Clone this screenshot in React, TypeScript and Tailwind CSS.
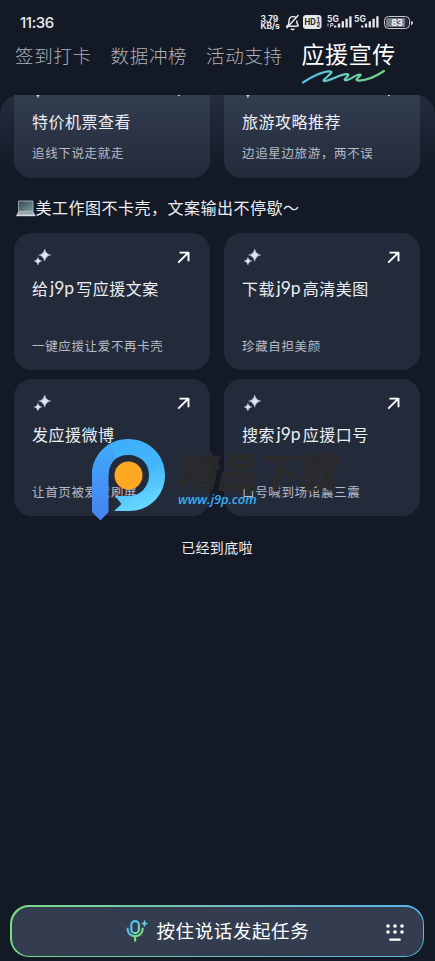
import React from 'react';

const Sparkles = () => (
  <svg width="18" height="18" viewBox="0 0 18 18">
    <defs>
      <linearGradient id="spark" x1="0" y1="0" x2="1" y2="1">
        <stop offset="0" stopColor="#8ea5c4" />
        <stop offset=".5" stopColor="#e2edf5" />
        <stop offset="1" stopColor="#a9bac0" />
      </linearGradient>
    </defs>
    <path d="M10.700 1C12 4.900 13.200 6.300 17 7.100C13.200 7.900 12 9.400 10.700 13.200C9.400 9.400 8.200 7.900 4.500 7.100C8.200 6.300 9.400 4.900 10.700 1Z" fill="url(#spark)" stroke="#b4c4d6" strokeWidth=".4" />
    <path d="M3.900 9.200C4.700 11.600 5.400 12.500 8 13C5.400 13.500 4.700 14.500 3.900 17C3.100 14.500 2.400 13.500 0 13C2.400 12.500 3.100 11.600 3.900 9.200Z" fill="url(#spark)" stroke="#b4c4d6" strokeWidth=".4" />
  </svg>
);

const Arrow = () => (
  <svg width="13" height="13" viewBox="0 0 13 13" fill="none" stroke="#fff" strokeWidth="1.9" strokeLinejoin="round">
    <path d="M1.200 11.600L11.200 1.800M2.500 1.600H11.500V10.300" />
  </svg>
);

const Card = ({ title, sub }: { title: React.ReactNode; sub: string }) => (
  <div className="h-[137px] rounded-[18px] bg-[#232b3b] pl-[18px] pr-5 pt-[15px]">
    <div className="flex h-[18px] justify-between">
      <span className="pl-0.5"><Sparkles /></span>
      <span className="pt-[3px]"><Arrow /></span>
    </div>
    <div className="mt-[10px] flex h-6 items-center whitespace-nowrap text-[16px] leading-[22px] tracking-[0.5px] text-[#eceef2]">{title}</div>
    <div className="mt-[36px] h-5 whitespace-nowrap text-[12.5px] leading-5 tracking-[0.65px] text-[#b7bcc6]">{sub}</div>
  </div>
);

const TopCard = ({ title, sub }: { title: string; sub: string }) => (
  <div className="h-[83px] overflow-hidden rounded-b-[18px] bg-linear-to-b from-[#323d50] to-[#232b3b] pl-[18px] pr-5">
    <div className="flex h-[14px] justify-between">
      <span className="-mt-[14px] pl-0.5"><Sparkles /></span>
      <span className="-mt-[11px]"><Arrow /></span>
    </div>
    <div className="flex h-6 items-center text-[16px] tracking-[0.5px] text-[#eceef2]">{title}</div>
    <div className="mt-[10px] h-5 text-[12.5px] leading-5 tracking-[0.65px] text-[#b7bcc6]">{sub}</div>
  </div>
);

const Latin = () => <span className="ml-[1.5px] mr-[2px] font-['Lato'] text-[17.5px] leading-6 tracking-[0px]">j9p</span>;

const Signal = ({ data }: { data?: boolean }) => (
  <svg className="overflow-visible" width="26" height="15" viewBox="0 0 26 15">
    <text x="0" y="7.500" fontSize="8.500" fontWeight="700" fill="#e3e5e9" fontFamily="Inter, sans-serif">5G</text>
    {data && <path d="M1 9.500V12.500M3.600 13.500V9.500H6V11.500H4" stroke="#c5c9d0" strokeWidth="1" fill="none" />}
    <path d="M8.200 13.500V11.400M12 13.500V9.500M15.800 13.500V7.200M19.600 13.500V4.800M23.400 13.500V2.200" stroke="#e7e9ed" strokeWidth="2.300" />
  </svg>
);

const StatusBar = () => (
  <div className="flex h-[38px] items-start pl-5 pt-[14px] text-[#e7e9ed]">
    <div className="w-[240.5px] font-['Inter'] text-[15px] font-medium leading-[18px] tracking-[-0.4px]">11:36</div>
    <div className="w-[24.5px] pt-[1.5px] font-['Inter'] text-[8.5px] font-bold leading-[7.5px] tracking-[-0.2px]">
      <div>3.79</div>
      <div>KB/s</div>
    </div>
    <svg className="-mt-px" width="18" height="18" viewBox="0 0 18 18" fill="none" stroke="#e3e5e9" strokeWidth="1.500">
      <path d="M1 13.200H12.800M2.700 13C4.500 11 3.200 7 5 4.800C6.600 3 9.600 3 11 4.800M11.700 7.500C11.700 10 12 11.500 13.600 13.200M5.800 15.800Q7.600 17.400 9.400 15.800M13.500 2L1.500 15.200" />
    </svg>
    <svg className="mt-px" width="19" height="14" viewBox="0 0 19 14">
      <rect width="18.500" height="14" rx="3" fill="#e3e5e9" />
      <text x="1.500" y="10.300" fontSize="8.500" fontWeight="700" fill="#202636" fontFamily="Inter, sans-serif" textLength="11.300" lengthAdjust="spacingAndGlyphs">HD</text>
      <text x="13.800" y="6.500" fontSize="5.500" fontWeight="800" fill="#202636" fontFamily="Inter, sans-serif">1</text>
      <text x="13.500" y="12.300" fontSize="5.500" fontWeight="800" fill="#202636" fontFamily="Inter, sans-serif">2</text>
    </svg>
    <div className="ml-[5px]"><Signal data /></div>
    <div className="ml-px"><Signal /></div>
    <div className="ml-[4px] mt-[2px] flex items-center">
      <div className="flex h-[13px] w-[26px] rounded-[4.5px] border-[1.5px] border-[#c9ccd3] p-px">
        <div className="flex h-full w-full items-center justify-center rounded-[2px] bg-linear-to-r from-[#737986] from-85% to-[#252c3b] to-85% font-['Inter'] text-[9px] font-bold leading-none text-white">83</div>
      </div>
      <div className="ml-px h-[4px] w-[1.5px] rounded-r bg-[#c9ccd3]" />
    </div>
  </div>
);

const Laptop = () => (
  <svg width="20" height="17" viewBox="0 0 20 17">
    <defs>
      <linearGradient id="screen" x1="0" y1="0" x2="1" y2="1">
        <stop offset="0" stopColor="#36494d" />
        <stop offset="1" stopColor="#78999d" />
      </linearGradient>
    </defs>
    <rect x="2" y="0.500" width="15.500" height="11.500" rx="1" fill="#99a5ad" />
    <rect x="3" y="1.600" width="13.500" height="9.200" fill="url(#screen)" />
    <path d="M2.200 11.500H17.300L19.300 15.200H.4Z" fill="#b7bdc5" />
    <path d="M3.400 12.300H16.200L17 13.700H2.800Z" fill="#8f98a3" />
    <path d="M.4 15H19.300V16.200H.4Z" fill="#d5d9de" />
  </svg>
);

const Watermark = () => (
  <div className="pointer-events-none absolute left-[91px] top-[438px] h-[84px] w-[260px]">
    <svg className="absolute left-0 top-0" width="76" height="84" viewBox="0 0 76 84">
      <defs>
        <linearGradient id="ring" x1=".3" y1="0" x2=".7" y2="1">
          <stop offset="0" stopColor="#3fadf9" />
          <stop offset=".5" stopColor="#43b6fb" />
          <stop offset="1" stopColor="#69dcfc" />
        </linearGradient>
        <linearGradient id="stem" x1="0" y1="0" x2="0" y2="1">
          <stop offset="0" stopColor="#40abf8" />
          <stop offset=".5" stopColor="#4493f9" />
          <stop offset="1" stopColor="#4385ee" />
        </linearGradient>
      </defs>
      <path d="M37 1C58 1 74 17 74 37C74 58 58 73 38 73H23L30.500 66L24 58H38C50 58 58 48 58 37C58 25 49 17 37 17C25 17 17.500 25 17.500 37L1 37C1 17 17 1 37 1Z" fill="url(#ring)" />
      <path d="M1 37C1 24 8 13 18 7L25 20C20 24 17.500 30 17.500 37V74L9.500 82.500L1 74Z" fill="url(#stem)" />
      <circle cx="37.500" cy="37.500" r="14" fill="#fca821" />
    </svg>
    <div className="absolute left-[89px] top-[7px] -skew-x-[10deg] whitespace-nowrap text-[40px] font-bold leading-[50px] text-[#29292a] [-webkit-text-stroke:0.6px_#29292a] [text-shadow:0_0_1px_#45474c]">精品下载</div>
    <div className="absolute left-[87px] top-[51px] font-['Open_Sans'] text-[13px] font-semibold italic leading-5 tracking-[-0.1px] text-[#35aff0]">www.j9p.com</div>
  </div>
);

export default function App() {
  return (
    <div className="relative flex h-[961px] w-[435px] flex-col overflow-hidden bg-[#141926] font-['Noto_Sans_CJK_SC',sans-serif]">
      <StatusBar />
      <div className="flex h-[57px] whitespace-nowrap pl-[15px] text-[18.5px] leading-[34px] tracking-[0.7px] text-[#adb2bc]">
        <span className="w-[95.5px] font-light">签到打卡</span>
        <span className="w-[95.5px] font-light">数据冲榜</span>
        <span className="w-[95.5px] font-light">活动支持</span>
        <div className="w-[100px] text-[23px] leading-[33px] tracking-[0.6px] text-white">
          <div className="-mt-px h-[33px]">应援宣传</div>
          <svg width="86" height="17" viewBox="0 0 86 17" fill="none">
            <defs>
              <linearGradient id="scribble" x1="0" y1="0" x2="1" y2="0">
                <stop offset="0" stopColor="#55b9ee" />
                <stop offset=".45" stopColor="#67d1c0" />
                <stop offset="1" stopColor="#75cc79" />
              </linearGradient>
            </defs>
            <path d="M1 12.500C9 7 21 1 28 1.300C34 1.800 19 10 22 11C26 12 39 3.500 45 4.200C50 5 39 10 44 10.300C48 10.500 54 4 58 4.500C61 5 51 10 56 10.500C66 11 76 5 82 1" stroke="url(#scribble)" strokeWidth="2.200" strokeLinecap="round" strokeLinejoin="round" />
          </svg>
        </div>
      </div>
      <main className="flex flex-1 flex-col rounded-t-[20px] bg-linear-to-b from-[#252d3e] to-[#141926] to-[75px]">
        <div className="grid grid-cols-2 gap-x-[14px] pl-[14px] pr-[15px]">
          <TopCard title="特价机票查看" sub="追线下说走就走" />
          <TopCard title="旅游攻略推荐" sub="边追星边旅游，两不误" />
        </div>
        <div className="mt-[17px] flex h-6 items-center whitespace-nowrap pl-[15.5px] text-[16px] tracking-[0.5px] text-[#eceef2]">
          <span className="pt-0.5"><Laptop /></span>
          <span>美工作图不卡壳，文案输出不停歇～</span>
        </div>
        <div className="mt-[14px] grid grid-cols-2 gap-x-[14px] gap-y-[9px] pl-[14px] pr-[15px]">
          <Card title={<>给<Latin />写应援文案</>} sub="一键应援让爱不再卡壳" />
          <Card title={<>下载<Latin />高清美图</>} sub="珍藏自担美颜" />
          <Card title="发应援微博" sub="让首页被爱意刷屏" />
          <Card title={<>搜索<Latin />应援口号</>} sub="口号喊到场馆震三震" />
        </div>
        <div className="mt-[21px] pr-px text-center text-[14px] leading-5 tracking-[0.3px] text-[#eceef2]">已经到底啦</div>
      </main>
      <div className="mb-[4px] ml-[10px] h-[52px] w-[414px] rounded-[19px] bg-linear-to-r from-[#7bdc84] via-[#74bcbb] to-[#58b7ef] p-[1.5px]">
        <div className="flex h-full items-center rounded-[17.5px] bg-[#333d4f] pl-[113px] pr-[18px]">
          <svg width="24" height="24" viewBox="0 0 24 24" fill="none" stroke="url(#mic)" strokeWidth="2.200">
            <defs>
              <linearGradient id="mic" gradientUnits="userSpaceOnUse" x1="3" y1="6" x2="19" y2="17">
                <stop offset="0" stopColor="#54b5f2" />
                <stop offset=".48" stopColor="#63cdd0" />
                <stop offset=".65" stopColor="#7adb83" />
                <stop offset="1" stopColor="#7adb83" />
              </linearGradient>
            </defs>
            <rect x="6.300" y="2.200" width="7.600" height="12" rx="3.800" />
            <path d="M2.600 8.800V10.200C2.600 14.200 6 17.200 10.100 17.200S17.600 14.200 17.600 10.200V8.800M10.100 17.200V22.500" />
            <path d="M19.500 1.200Q19.800 4.100 22.500 4.500Q19.800 4.900 19.500 7.800Q19.200 4.900 16.500 4.500Q19.200 4.100 19.500 1.200Z" fill="#6dc9e5" stroke="#6dc9e5" strokeWidth=".5" />
          </svg>
          <span className="ml-[8px] flex-1 whitespace-nowrap pb-0.5 text-[18.5px] leading-[28px] tracking-[0.6px] text-white">按住说话发起任务</span>
          <svg className="mt-[4px]" width="20" height="20" viewBox="0 0 20 20" fill="#fff">
            <circle cx="3" cy="3" r="1.800" /><circle cx="10" cy="3" r="1.800" /><circle cx="17" cy="3" r="1.800" />
            <circle cx="3" cy="9" r="1.800" /><circle cx="10" cy="9" r="1.800" /><circle cx="17" cy="9" r="1.800" />
            <rect x="4.200" y="15.500" width="11.600" height="2.200" rx="1" />
          </svg>
        </div>
      </div>
      <Watermark />
    </div>
  );
}
